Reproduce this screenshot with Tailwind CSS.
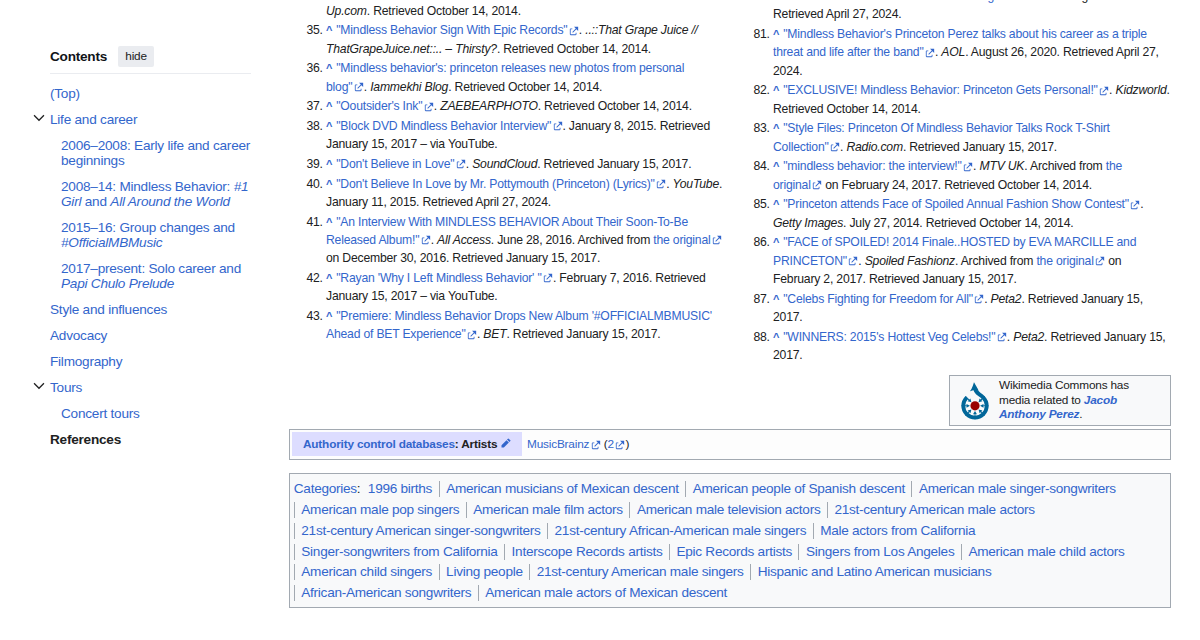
<!DOCTYPE html>
<html lang="en">
<head>
    <meta charset="UTF-8">
    <meta name="viewport" content="width=device-width, initial-scale=1.0">
    <title>Princeton Perez</title>
    <script src="https://cdn.jsdelivr.net/npm/@tailwindcss/browser@4"></script>
</head>
<body class="bg-white text-[#202122] font-['Liberation_Sans',Arial,sans-serif]">
    <!-- Icons -->
    <svg class="hidden">
        <symbol id="ext" viewBox="0 0 12 12"><path fill="#36c" d="M6 1h5v5L8.86 3.85 4.7 8 4 7.3l4.15-4.16zM2 3h2v1H2v6h6V8h1v2a1 1 0 0 1-1 1H2a1 1 0 0 1-1-1V4a1 1 0 0 1 1-1"/></symbol>
        <symbol id="down" viewBox="0 0 20 20"><path fill="#202122" d="m17.5 4.75-7.5 7.5-7.5-7.5L1 6.25l9 9 9-9z"/></symbol>
        <symbol id="pen" viewBox="0 0 20 20"><path fill="#36c" d="m16.77 8 1.94-2a1 1 0 0 0 0-1.41l-3.34-3.3a1 1 0 0 0-1.41 0L12 3.23zM1 14.25V19h4.75l9.96-9.96-4.75-4.75z"/></symbol>
    </svg>

    <div class="flex h-[640px] overflow-hidden">
        <!-- Contents -->
        <nav class="w-[288.5px] shrink-0 pl-[50px] pt-[46px] text-[13.6px] tracking-[-0.23px] text-[#3366cc]">
            <div class="flex items-center h-[28px] w-[201px] border-b border-[#eaecf0] pb-[6px] mb-[6px] box-border">
                <h2 class="font-bold text-[#101418] mt-[1px]">Contents</h2>
                <button class="ml-[11px] h-[21px] w-[36px] rounded-[2px] bg-[#eaecf0] text-[11.8px] text-[#202122]">hide</button>
            </div>
            <ul class="leading-[15px] whitespace-nowrap">
                <li class="py-[5.55px]"><a>(Top)</a></li>
                <li class="flex items-center py-[5.55px] -ml-[17px]"><svg class="w-[12px] h-[12px] mr-[5px] -mt-[3px]"><use href="#down"/></svg><a>Life and career</a></li>
                <li class="py-[5.55px] pl-[11px]"><a>2006–2008: Early life and career<br>beginnings</a></li>
                <li class="py-[5.55px] pl-[11px]"><a>2008–14: Mindless Behavior: <i>#1<br>Girl</i> and <i>All Around the World</i></a></li>
                <li class="py-[5.55px] pl-[11px]"><a>2015–16: Group changes and<br><i>#OfficialMBMusic</i></a></li>
                <li class="py-[5.55px] pl-[11px]"><a>2017–present: Solo career and<br><i>Papi Chulo Prelude</i></a></li>
                <li class="py-[5.55px]"><a>Style and influences</a></li>
                <li class="py-[5.55px]"><a>Advocacy</a></li>
                <li class="py-[5.55px]"><a>Filmography</a></li>
                <li class="flex items-center py-[5.55px] -ml-[17px]"><svg class="w-[12px] h-[12px] mr-[5px] -mt-[3px]"><use href="#down"/></svg><a>Tours</a></li>
                <li class="py-[5.55px] pl-[11px]"><a>Concert tours</a></li>
                <li class="py-[5px] font-bold text-[#202122]"><a>References</a></li>
            </ul>
        </nav>

        <main class="w-[882.5px] flex flex-col">
            <!-- References -->
            <div class="flex h-[375px] text-[12.2px] tracking-[-0.2px] leading-[18.4px] whitespace-nowrap [&_a]:text-[#3366cc] [&_b]:text-[#3366cc] [&_b]:text-[11px] [&_b]:mr-[0.8px] [&_b]:leading-none [&_svg]:inline [&_svg]:align-[-1.5px] [&_svg]:w-[10px] [&_svg]:h-[10px] [&_svg]:ml-[1.4px] [&_li]:mb-[1.2px]">
                <ol start="34" class="list-decimal w-[447px] shrink-0 pl-[37.5px] pt-[1.8px]">
                    <li class="list-none"><i>Up.com</i>. Retrieved October 14, 2014.</li>
                    <li><b>^</b> <a>"Mindless Behavior Sign With Epic Records"<svg><use href="#ext"/></svg></a>. <i>..::That Grape Juice //<br>ThatGrapeJuice.net::.. – Thirsty?</i>. Retrieved October 14, 2014.</li>
                    <li><b>^</b> <a>"Mindless behavior's: princeton releases new photos from personal<br>blog"<svg><use href="#ext"/></svg></a>. <i>Iammekhi Blog</i>. Retrieved October 14, 2014.</li>
                    <li><b>^</b> <a>"Ooutsider's Ink"<svg><use href="#ext"/></svg></a>. <i>ZAEBEARPHOTO</i>. Retrieved October 14, 2014.</li>
                    <li><b>^</b> <a>"Block DVD Mindless Behavior Interview"<svg><use href="#ext"/></svg></a>. January 8, 2015. Retrieved<br>January 15, 2017 – via YouTube.</li>
                    <li><b>^</b> <a>"Don't Believe in Love"<svg><use href="#ext"/></svg></a>. <i>SoundCloud</i>. Retrieved January 15, 2017.</li>
                    <li><b>^</b> <a>"Don't Believe In Love by Mr. Pottymouth (Princeton) (Lyrics)"<svg><use href="#ext"/></svg></a>. <i>YouTube</i>.<br>January 11, 2015. Retrieved April 27, 2024.</li>
                    <li><b>^</b> <a>"An Interview With MINDLESS BEHAVIOR About Their Soon-To-Be<br>Released Album!"<svg><use href="#ext"/></svg></a>. <i>All Access</i>. June 28, 2016. Archived from <a>the original<svg><use href="#ext"/></svg></a><br>on December 30, 2016. Retrieved January 15, 2017.</li>
                    <li><b>^</b> <a>"Rayan 'Why I Left Mindless Behavior' "<svg><use href="#ext"/></svg></a>. February 7, 2016. Retrieved<br>January 15, 2017 – via YouTube.</li>
                    <li><b>^</b> <a>"Premiere: Mindless Behavior Drops New Album '#OFFICIALMBMUSIC'<br>Ahead of BET Experience"<svg><use href="#ext"/></svg></a>. <i>BET</i>. Retrieved January 15, 2017.</li>
                </ol>
                <ol start="80" class="list-decimal w-[436px] shrink-0 pl-[37.5px] -mt-[13.3px]">
                    <li class="list-none"><a class="inline-block w-[221px] text-right">g</a><span class="inline-block w-[94px] text-right">g</span><br>Retrieved April 27, 2024.</li>
                    <li><b>^</b> <a>"Mindless Behavior's Princeton Perez talks about his career as a triple<br>threat and life after the band"<svg><use href="#ext"/></svg></a>. <i>AOL</i>. August 26, 2020. Retrieved April 27,<br>2024.</li>
                    <li><b>^</b> <a>"EXCLUSIVE! Mindless Behavior: Princeton Gets Personal!"<svg><use href="#ext"/></svg></a>. <i>Kidzworld</i>.<br>Retrieved October 14, 2014.</li>
                    <li><b>^</b> <a>"Style Files: Princeton Of Mindless Behavior Talks Rock T-Shirt<br>Collection"<svg><use href="#ext"/></svg></a>. <i>Radio.com</i>. Retrieved January 15, 2017.</li>
                    <li><b>^</b> <a>"mindless behavior: the interview!"<svg><use href="#ext"/></svg></a>. <i>MTV UK</i>. Archived from <a>the<br>original<svg><use href="#ext"/></svg></a> on February 24, 2017. Retrieved October 14, 2014.</li>
                    <li><b>^</b> <a>"Princeton attends Face of Spoiled Annual Fashion Show Contest"<svg><use href="#ext"/></svg></a>.<br><i>Getty Images</i>. July 27, 2014. Retrieved October 14, 2014.</li>
                    <li><b>^</b> <a>"FACE of SPOILED! 2014 Finale..HOSTED by EVA MARCILLE and<br>PRINCETON"<svg><use href="#ext"/></svg></a>. <i>Spoiled Fashionz</i>. Archived from <a>the original<svg><use href="#ext"/></svg></a> on<br>February 2, 2017. Retrieved January 15, 2017.</li>
                    <li><b>^</b> <a>"Celebs Fighting for Freedom for All"<svg><use href="#ext"/></svg></a>. <i>Peta2</i>. Retrieved January 15,<br>2017.</li>
                    <li><b>^</b> <a>"WINNERS: 2015's Hottest Veg Celebs!"<svg><use href="#ext"/></svg></a>. <i>Peta2</i>. Retrieved January 15,<br>2017.</li>
                </ol>
            </div>

            <!-- Commons -->
            <div class="self-end flex items-center w-[222px] h-[51px] shrink-0 border border-[#a2a9b1] bg-[#f8f9fa] pl-[11px] text-[11.8px] tracking-[-0.18px] leading-[14.4px] whitespace-nowrap">
                <svg class="w-[28px] h-[38px] mr-[10px]" viewBox="-305 -516 610 820">
                    <defs>
                        <clipPath id="disc"><circle r="298"/></clipPath>
                        <g id="spoke"><path d="m-11 180v118h22v-118"/><path d="m-43 185 43-75 43 75"/></g>
                    </defs>
                    <circle r="100" fill="#900"/>
                    <g fill="#069">
                        <g clip-path="url(#disc)">
                            <use href="#spoke"/>
                            <use href="#spoke" transform="rotate(45)"/>
                            <use href="#spoke" transform="rotate(90)"/>
                            <use href="#spoke" transform="rotate(135)"/>
                            <use href="#spoke" transform="rotate(225)"/>
                            <use href="#spoke" transform="rotate(270)"/>
                            <use href="#spoke" transform="rotate(315)"/>
                        </g>
                        <path fill="none" stroke="#069" stroke-width="84" d="m-181-181a256 256 0 1 0 362 0c-91-91-181-91-181-213"/>
                        <path d="m-23-515s-36 135-80 185 116-62 170-5-90-180-90-180z"/>
                    </g>
                </svg>
                <p class="-mt-[1px]">Wikimedia Commons has<br>media related to <b class="italic text-[#3366cc]">Jacob<br>Anthony Perez</b>.</p>
            </div>

            <!-- Authority control -->
            <div class="mt-[3px] flex items-start h-[31px] shrink-0 border border-[#a2a9b1] bg-[#fdfdfd] p-[2px] text-[11.8px] tracking-[-0.18px] leading-[23px] whitespace-nowrap text-[#3366cc]">
                <div class="flex items-center w-[230.5px] h-[24px] bg-[#ddddff] pl-[11.5px] font-bold">Authority control databases<span class="text-[#202122]">: Artists</span><svg class="w-[10px] h-[10px] ml-[4px] -mt-[3px]"><use href="#pen"/></svg></div>
                <div class="flex items-center h-[24px] pl-[5px]">MusicBrainz<svg class="w-[10px] h-[10px] ml-[1.5px] mr-[3px] mt-[1px]"><use href="#ext"/></svg><span class="text-[#202122]">(</span>2<svg class="w-[10px] h-[10px] ml-[1.5px] mt-[1px]"><use href="#ext"/></svg><span class="text-[#202122]">)</span></div>
            </div>

            <!-- Categories -->
            <div class="mt-[13px] h-[135px] shrink-0 border border-[#a2a9b1] bg-[#f8f9fa] pl-[4.3px] pt-[5px] text-[13.6px] tracking-[-0.27px] leading-[16px] whitespace-nowrap text-[#3366cc] [&_li]:px-[6.5px] [&_li]:border-l [&_li]:border-[#a2a9b1] [&_ul]:flex [&_ul]:h-[20.75px] [&_ul]:items-center">
                <ul><li class="border-l-0! px-0! mr-[1px]">Categories<span class="text-[#202122]">:</span></li><li class="border-l-0!">1996 births</li><li>American musicians of Mexican descent</li><li>American people of Spanish descent</li><li>American male singer-songwriters</li></ul>
                <ul><li>American male pop singers</li><li>American male film actors</li><li>American male television actors</li><li>21st-century American male actors</li></ul>
                <ul><li>21st-century American singer-songwriters</li><li>21st-century African-American male singers</li><li>Male actors from California</li></ul>
                <ul><li>Singer-songwriters from California</li><li>Interscope Records artists</li><li>Epic Records artists</li><li>Singers from Los Angeles</li><li>American male child actors</li></ul>
                <ul><li>American child singers</li><li>Living people</li><li>21st-century American male singers</li><li>Hispanic and Latino American musicians</li></ul>
                <ul><li>African-American songwriters</li><li>American male actors of Mexican descent</li></ul>
            </div>
        </main>
    </div>
</body>
</html>
